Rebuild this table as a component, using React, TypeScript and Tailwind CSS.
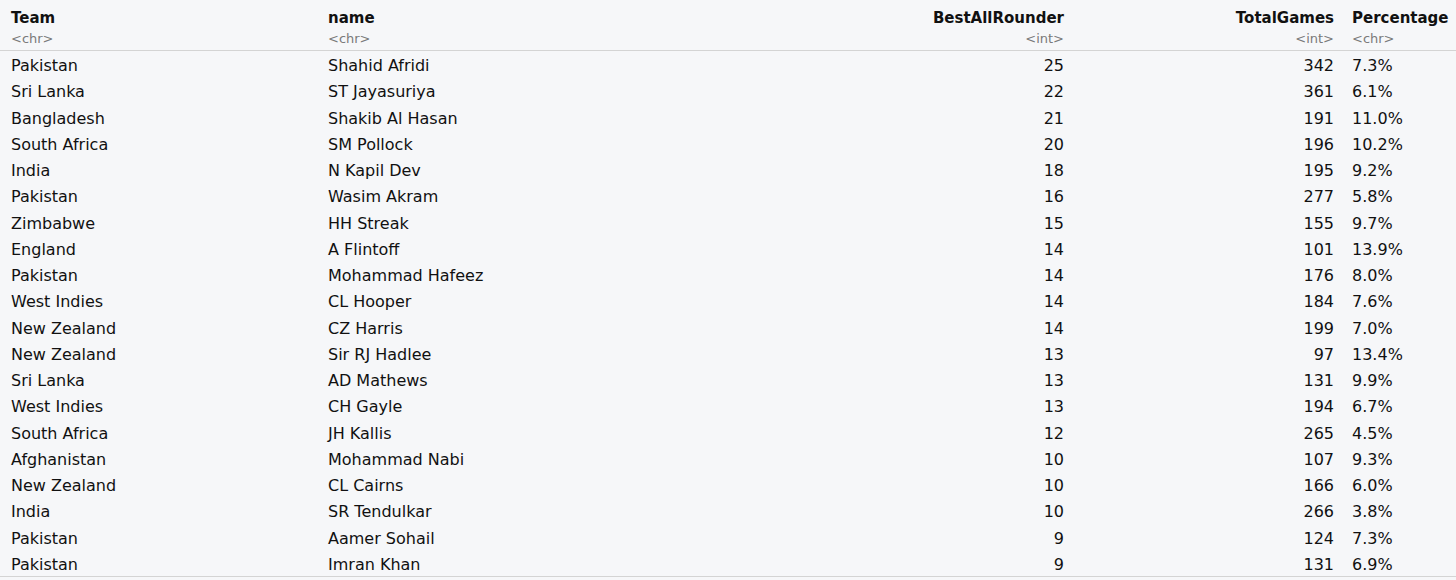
import React from "react";

const rows: [string, string, number, number, string][] = [
  ["Pakistan", "Shahid Afridi", 25, 342, "7.3%"],
  ["Sri Lanka", "ST Jayasuriya", 22, 361, "6.1%"],
  ["Bangladesh", "Shakib Al Hasan", 21, 191, "11.0%"],
  ["South Africa", "SM Pollock", 20, 196, "10.2%"],
  ["India", "N Kapil Dev", 18, 195, "9.2%"],
  ["Pakistan", "Wasim Akram", 16, 277, "5.8%"],
  ["Zimbabwe", "HH Streak", 15, 155, "9.7%"],
  ["England", "A Flintoff", 14, 101, "13.9%"],
  ["Pakistan", "Mohammad Hafeez", 14, 176, "8.0%"],
  ["West Indies", "CL Hooper", 14, 184, "7.6%"],
  ["New Zealand", "CZ Harris", 14, 199, "7.0%"],
  ["New Zealand", "Sir RJ Hadlee", 13, 97, "13.4%"],
  ["Sri Lanka", "AD Mathews", 13, 131, "9.9%"],
  ["West Indies", "CH Gayle", 13, 194, "6.7%"],
  ["South Africa", "JH Kallis", 12, 265, "4.5%"],
  ["Afghanistan", "Mohammad Nabi", 10, 107, "9.3%"],
  ["New Zealand", "CL Cairns", 10, 166, "6.0%"],
  ["India", "SR Tendulkar", 10, 266, "3.8%"],
  ["Pakistan", "Aamer Sohail", 9, 124, "7.3%"],
  ["Pakistan", "Imran Khan", 9, 131, "6.9%"],
];

const grid = "grid grid-cols-[317px_572px_164px_270px_18px_1fr]";

export default function App() {
  return (
    <div
      className="w-[1456px] h-[580px] bg-[#f6f7f9] text-[#111] overflow-hidden"
      style={{ fontFamily: '"DejaVu Sans", sans-serif' }}
    >
      <div className="pl-[11px] border-b border-[#d4d4d4] h-[51px]">
        <div className={`${grid} pt-[8px] text-[15px] font-bold leading-[20px]`}>
          <div>Team</div>
          <div>name</div>
          <div className="text-right">BestAllRounder</div>
          <div className="text-right">TotalGames</div>
          <div></div>
          <div>Percentage</div>
        </div>
        <div className={`${grid} text-[13px] leading-[17px] text-[#7a7a7a] pt-[2px]`}>
          <div>&lt;chr&gt;</div>
          <div>&lt;chr&gt;</div>
          <div className="text-right">&lt;int&gt;</div>
          <div className="text-right">&lt;int&gt;</div>
          <div></div>
          <div>&lt;chr&gt;</div>
        </div>
      </div>
      <div className="pl-[11px] border-b border-[#d4d4d4]">
        {rows.map((r, i) => (
          <div key={i} className={`${grid} h-[26.25px] pt-[5px] text-[16px] leading-[20px]`}>
            <div>{r[0]}</div>
            <div>{r[1]}</div>
            <div className="text-right">{r[2]}</div>
            <div className="text-right">{r[3]}</div>
            <div></div>
            <div>{r[4]}</div>
          </div>
        ))}
      </div>
    </div>
  );
}
